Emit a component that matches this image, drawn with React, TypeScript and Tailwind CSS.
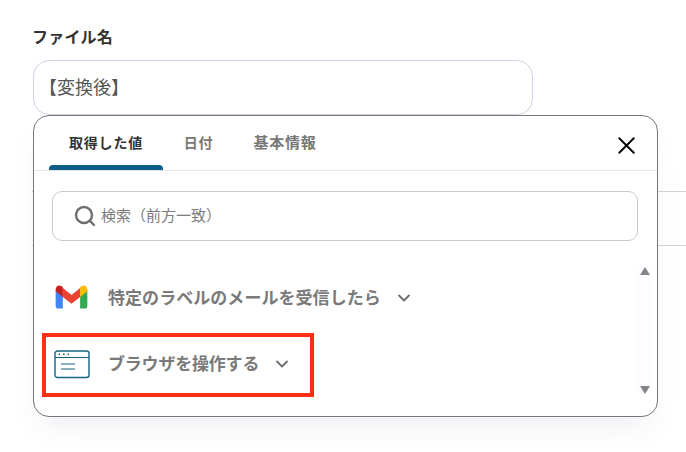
import { ChevronDown, Search, X } from 'lucide-react';

const jpFont = "font-['Noto_Sans_CJK_JP','Noto_Sans',sans-serif]";

function GmailIcon() {
  return (
    <svg width="33" height="24" viewBox="0 0 34 25" fill="none" className="shrink-0">
      <path d="M0.5 5 V21.5 Q0.5 24.5 3.5 24.5 H8 V11.5 Z" fill="#4285f4" />
      <path d="M33.5 5 V21.5 Q33.5 24.5 30.5 24.5 H26 V11.5 Z" fill="#34a853" />
      <path d="M8 3 L17 10.5 L26 3 V12.5 L17 19.5 L8 12.5 Z" fill="#ea4335" />
      <path d="M0.5 5.5 Q0.5 0.5 4.5 0.5 Q6 0.5 8 2.2 V12.5 L0.5 6.5 Z" fill="#c5221f" />
      <path d="M33.5 5.5 Q33.5 0.5 29.5 0.5 Q28 0.5 26 2.2 V12.5 L33.5 6.5 Z" fill="#fbbc04" />
    </svg>
  );
}

function BrowserIcon() {
  return (
    <svg width="36" height="29" viewBox="0 0 36 29" fill="none" className="mt-[2px] shrink-0" stroke="#156380">
      <rect x="1" y="1" width="34" height="26.5" rx="2.5" strokeWidth="1.4" />
      <path d="M1 7.5 H35" strokeWidth="1.2" />
      <path d="M4.5 4.2 H6 M9 4.2 H10.5 M13.5 4.2 H15" strokeWidth="1.6" />
      <path d="M7 14 H21 M7 19 H21" strokeWidth="1.2" />
    </svg>
  );
}

export default function App() {
  return (
    <div className={`relative w-[686px] h-[452px] overflow-hidden bg-white ${jpFont}`}>
      <div className="pl-[32px] pt-[25px]">
        <div className="text-[16px] leading-[22px] font-bold tracking-[0.2px] text-[#333]">ファイル名</div>
        <div className="mt-[13px] ml-px flex h-[55px] w-[500px] items-center rounded-[16px] border border-[#cfd4e2] pb-[2px] pl-[5px] text-[18px] text-[#555]">
          【変換後】
        </div>
        {/* field hidden behind the popup, only its right end shows */}
        <div className="mt-[76px] h-[55px] w-[654px] border-y border-[#d4d4d4]" />
      </div>

      <div className="absolute left-[33px] top-[115px] h-[302px] w-[625px] rounded-[16px] border border-[#77777b] bg-white shadow-[0_16px_30px_-10px_rgba(90,100,130,0.12)]">
        <div className="relative flex h-[55px] items-stretch border-b border-[#e6e6e8] pl-[15px] text-[14px] font-bold tracking-[0.8px]">
          <div className="relative flex w-[114px] items-center justify-center pb-[1px] text-[#333]">
            取得した値
            <div className="absolute inset-x-0 bottom-0 h-[5px] rounded-t-[4px] bg-[#0b5f86]" />
          </div>
          <div className="flex w-[71px] items-center justify-center pb-[1px] text-[#777]">日付</div>
          <div className="ml-[5px] flex w-[92px] items-center justify-center pb-[1px] text-[15px] text-[#777]">基本情報</div>
          <button className="absolute right-[16px] top-[15px] text-black">
            <X size={29} strokeWidth={1.6} />
          </button>
        </div>

        <div className="mx-[18px] mt-[20px] flex h-[50px] w-[586px] items-center rounded-[10px] border border-[#c9c9cc] pb-[1px] pl-[20px] text-[15px] text-[#7b7b7b]">
          <Search size={24} strokeWidth={2.4} className="mr-[4px] text-[#6f6f6f]" />
          検索（前方一致）
        </div>

        <div className="mt-[26px] flex h-[60px] items-center pl-[21px] text-[17px] font-bold tracking-[0.05px] text-[#7a7a7a]">
          <GmailIcon />
          <span className="ml-[20px]">特定のラベルのメールを受信したら</span>
          <ChevronDown size={20} strokeWidth={2.2} className="ml-[13px] mt-[1px] text-[#6f6f6f]" />
        </div>
        <div className="mt-[6px] flex h-[60px] items-center pl-[20px] text-[17px] font-bold tracking-[-0.2px] text-[#7a7a7a]">
          <BrowserIcon />
          <span className="ml-[18px]">ブラウザを操作する</span>
          <ChevronDown size={20} strokeWidth={2.2} className="ml-[13px] mt-[1px] text-[#6f6f6f]" />
        </div>

        {/* scrollbar arrows */}
        <div className="absolute right-[5px] top-[151px] flex h-[127px] w-[14px] flex-col items-center justify-between bg-[#fdfcff]">
          <div className="h-0 w-0 border-x-[5px] border-b-[8px] border-x-transparent border-b-[#85838a]" />
          <div className="h-0 w-0 border-x-[5px] border-t-[8px] border-x-transparent border-t-[#85838a]" />
        </div>
      </div>

      {/* red annotation frame */}
      <div className="absolute left-[42px] top-[333px] h-[64px] w-[272px] border-4 border-[#ff2e17]" />
    </div>
  );
}
